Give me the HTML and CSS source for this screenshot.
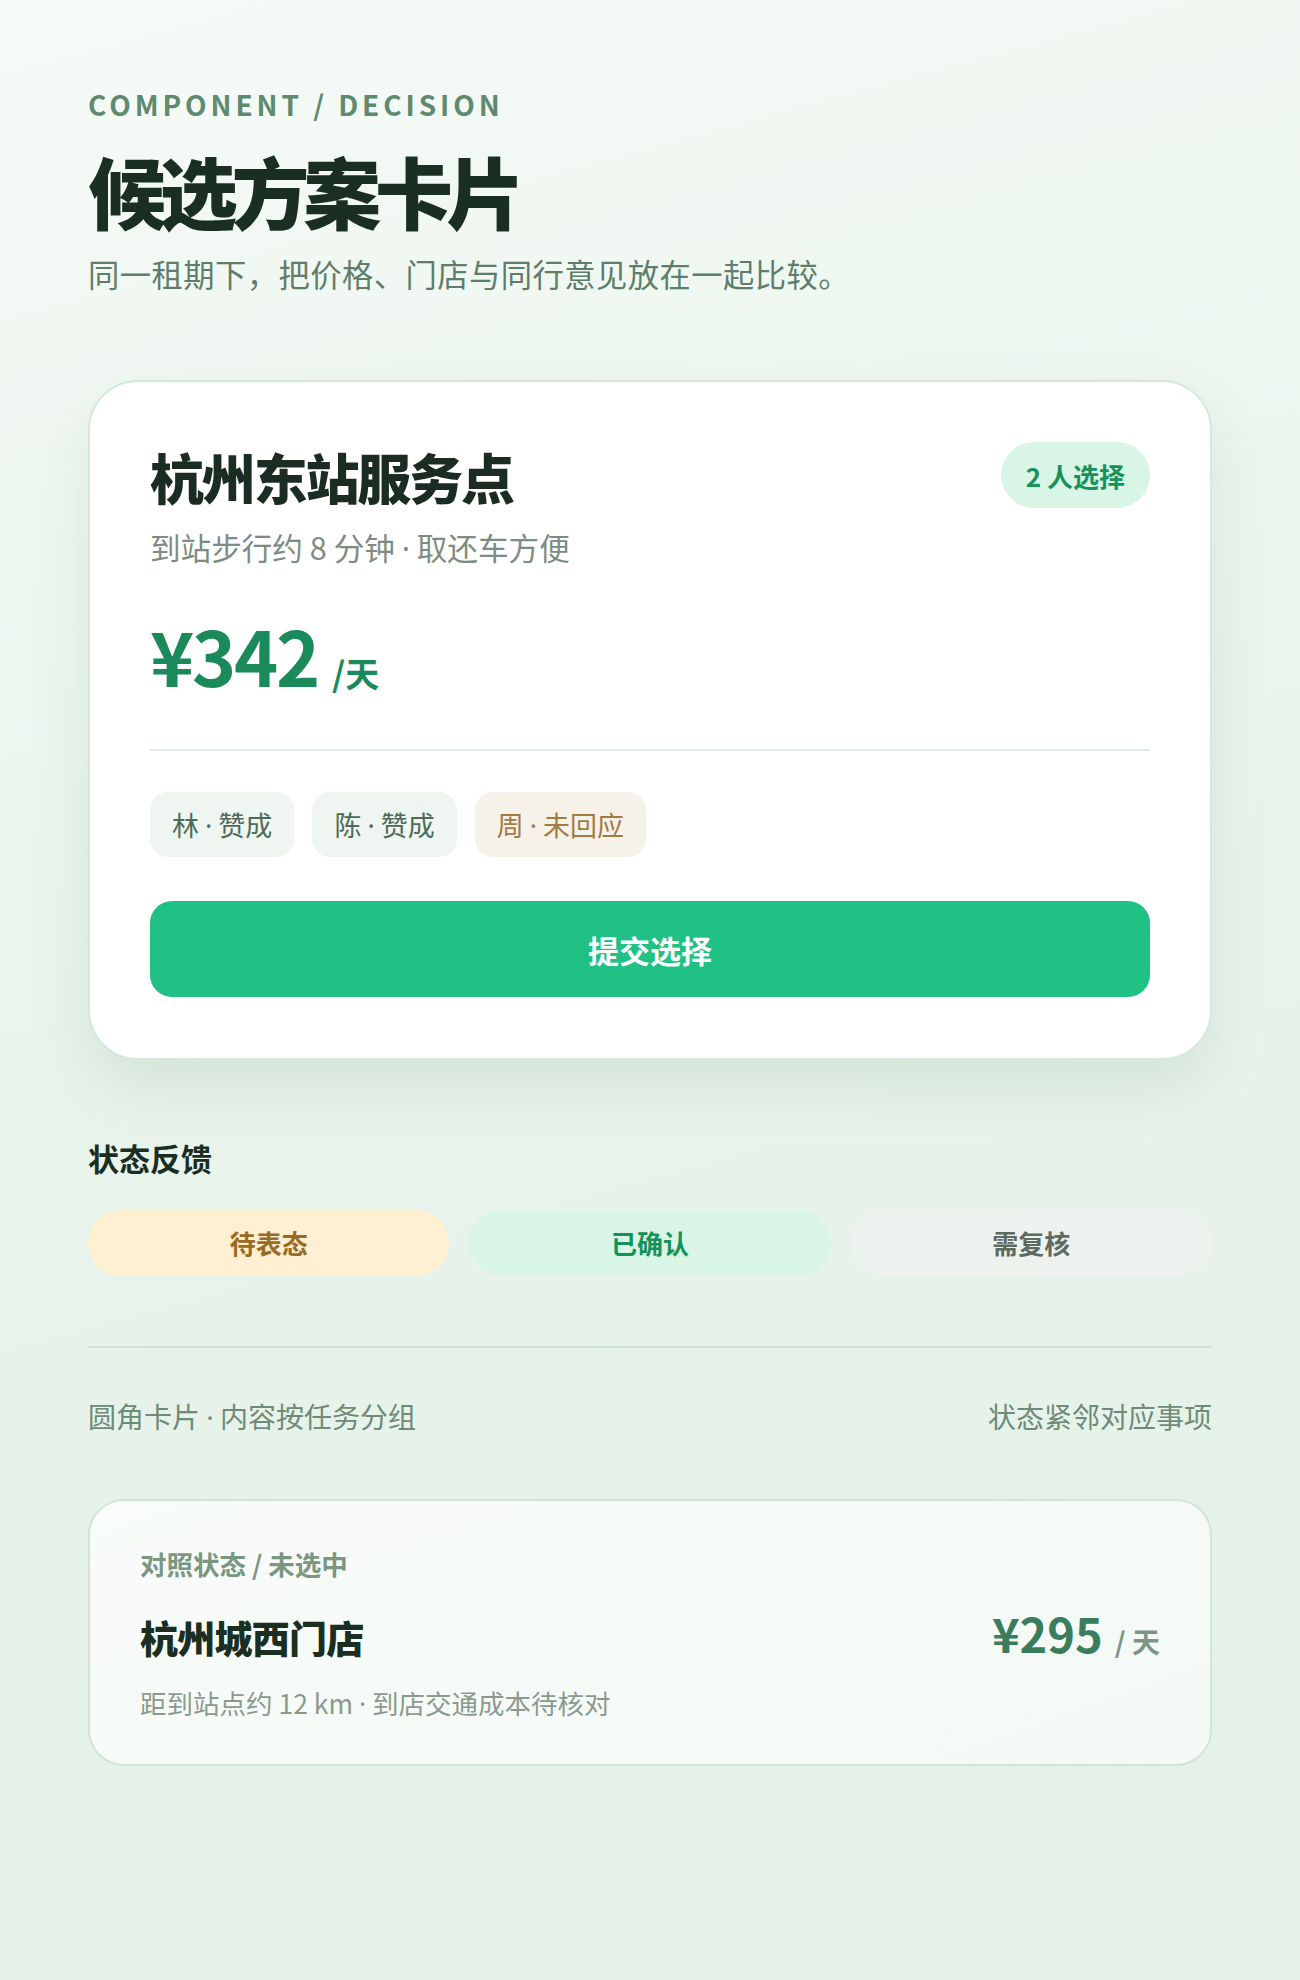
FILE: index.html
```html
<!DOCTYPE html>
<html lang="zh-CN">
<head>
    <meta charset="UTF-8">
    <meta name="viewport" content="width=device-width, initial-scale=1.0">
    <title>候选方案卡片</title>
    <link rel="stylesheet" href="styles.css">
</head>
<body>
    <main class="page">

        <!-- Intro -->
        <header class="intro">
            <p class="eyebrow">COMPONENT / DECISION</p>
            <h1>候选方案卡片</h1>
            <p class="lead">同一租期下，把价格、门店与同行意见放在一起比较。</p>
        </header>

        <!-- Selected option -->
        <section class="option-card">
            <div class="option-head">
                <div>
                    <h2>杭州东站服务点</h2>
                    <p class="option-meta">到站步行约 8 分钟 <span class="sep">·</span> 取还车方便</p>
                </div>
                <span class="pick-badge">2 人选择</span>
            </div>
            <div class="price">
                <strong>¥342</strong><span>/天</span>
            </div>
            <div class="votes">
                <span class="vote">林 <span class="sep">·</span> 赞成</span>
                <span class="vote">陈 <span class="sep">·</span> 赞成</span>
                <span class="vote vote-pending">周 <span class="sep">·</span> 未回应</span>
            </div>
            <button type="button" class="submit">提交选择</button>
        </section>

        <!-- Status feedback -->
        <section class="status">
            <h3>状态反馈</h3>
            <div class="status-row">
                <span class="status-pill pill-wait">待表态</span>
                <span class="status-pill pill-ok">已确认</span>
                <span class="status-pill pill-review">需复核</span>
            </div>
        </section>

        <div class="notes">
            <span>圆角卡片 <span class="sep">·</span> 内容按任务分组</span>
            <span>状态紧邻对应事项</span>
        </div>

        <!-- Compare option -->
        <section class="compare-card">
            <p class="compare-label">对照状态 / 未选中</p>
            <div class="compare-row">
                <h4>杭州城西门店</h4>
                <div class="compare-price"><strong>¥295</strong><span>/ 天</span></div>
            </div>
            <p class="compare-meta">距到站点约 12 km <span class="sep">·</span> 到店交通成本待核对</p>
        </section>

    </main>
</body>
</html>
```

FILE: styles.css
```css
/* General */
body {
    margin: 0;
    min-height: 1980px;
    font-family: "Noto Sans CJK SC", "Noto Sans", sans-serif;
    color: #1a2e22;
    background: linear-gradient(165deg, #f5faf6 0%, #e9f4ec 45%, #e3f1e6 100%);
    text-spacing-trim: space-all;
}
.page {
    width: 1124px;
    margin: 0 auto;
    padding: 88px 0 120px;
}
p, h1, h2, h3, h4 {
    margin: 0;
}
.sep {
    font-family: "Noto Sans", sans-serif;
    line-height: 1;
}

/* Intro */
.eyebrow {
    font-size: 28px;
    line-height: 1.2;
    font-weight: 700;
    letter-spacing: 0.14em;
    color: #5f8a70;
}
.intro h1 {
    margin-top: 26px;
    font-size: 78px;
    line-height: 1.1;
    font-weight: 900;
    letter-spacing: -0.08em;
    color: #1a2e22;
}
.lead {
    margin-top: 18px;
    font-size: 31.3px;
    line-height: 1.5;
    letter-spacing: 0.45px;
    color: #5e7d6a;
}

/* Option card */
.option-card {
    margin-top: 82px;
    background: #fff;
    border: 2px solid #d2eadb;
    border-radius: 50px;
    padding: 60px 60px 61px;
    box-shadow: 0 28px 60px rgba(40, 100, 60, 0.10);
}
.option-head {
    display: flex;
    justify-content: space-between;
    align-items: flex-start;
}
.option-head h2 {
    font-size: 54px;
    line-height: 1.3;
    font-weight: 900;
    letter-spacing: -0.04em;
    color: #1b2d22;
}
.option-meta {
    margin-top: 12px;
    font-size: 30.6px;
    line-height: 1.5;
    color: #7d8c82;
}
.pick-badge {
    flex-shrink: 0;
    display: inline-flex;
    align-items: center;
    height: 66px;
    padding: 0 25px;
    border-radius: 33px;
    background: #d9f5e6;
    color: #17925c;
    font-size: 26px;
    font-weight: 700;
}
.price {
    margin-top: 47px;
    padding-bottom: 57px;
    border-bottom: 2px solid #e4ece6;
    line-height: 1;
    color: #1b8a5a;
}
.price strong {
    font-size: 75px;
    font-weight: 700;
    letter-spacing: -0.03em;
}
.price span {
    margin-left: 14px;
    font-size: 34px;
    font-weight: 700;
}
.votes {
    display: flex;
    gap: 18px;
    margin-top: 41px;
}
.vote {
    padding: 14px 22px;
    border-radius: 18px;
    background: #eff5f1;
    color: #4d6b58;
    font-size: 27px;
    line-height: 37px;
}
.vote-pending {
    background: #f6f1e9;
    color: #a27a45;
}
.submit {
    display: block;
    width: 100%;
    height: 96px;
    margin-top: 44px;
    border: none;
    border-radius: 22px;
    background: #1fc184;
    color: #fff;
    font-family: inherit;
    font-size: 31px;
    font-weight: 700;
    cursor: pointer;
}

/* Status */
.status h3 {
    margin-top: 76px;
    font-size: 31px;
    line-height: 1.4;
    font-weight: 700;
    color: #1a2e22;
}
.status-row {
    display: grid;
    grid-template-columns: repeat(3, 1fr);
    gap: 20px;
    margin-top: 30px;
}
.status-pill {
    display: flex;
    align-items: center;
    justify-content: center;
    height: 66px;
    border-radius: 33px;
    font-size: 26px;
    font-weight: 700;
}
.pill-wait {
    background: #fff0d2;
    color: #9a6b25;
}
.pill-ok {
    background: #d9f5e6;
    color: #15925a;
}
.pill-review {
    background: #eef2ee;
    color: #5b6b5f;
}

/* Notes */
.notes {
    display: flex;
    justify-content: space-between;
    margin-top: 70px;
    padding-top: 47px;
    border-top: 2px solid #cfe0d4;
    font-size: 28px;
    line-height: 1.5;
    color: #6e8a78;
}

/* Compare card */
.compare-card {
    margin-top: 62px;
    padding: 44px 50px 41px;
    border: 2px solid #d2e3d7;
    border-radius: 36px;
    background: linear-gradient(160deg, rgba(255, 255, 255, 0.75), rgba(255, 255, 255, 0.55));
}
.compare-label {
    font-size: 26.5px;
    line-height: 1.4;
    font-weight: 700;
    color: #7a9782;
}
.compare-row {
    display: flex;
    justify-content: space-between;
    align-items: baseline;
    margin-top: 23px;
    line-height: 1.2;
}
.compare-row h4 {
    font-size: 38px;
    font-weight: 900;
    letter-spacing: -0.02em;
    color: #1a2e22;
}
.compare-price strong {
    font-size: 47px;
    font-weight: 700;
    color: #3a7d5c;
}
.compare-price span {
    margin-left: 12px;
    font-size: 28px;
    font-weight: 700;
    color: #7e9484;
}
.compare-meta {
    margin-top: 22px;
    font-size: 26.5px;
    line-height: 1.5;
    color: #8a9a8f;
}
```
